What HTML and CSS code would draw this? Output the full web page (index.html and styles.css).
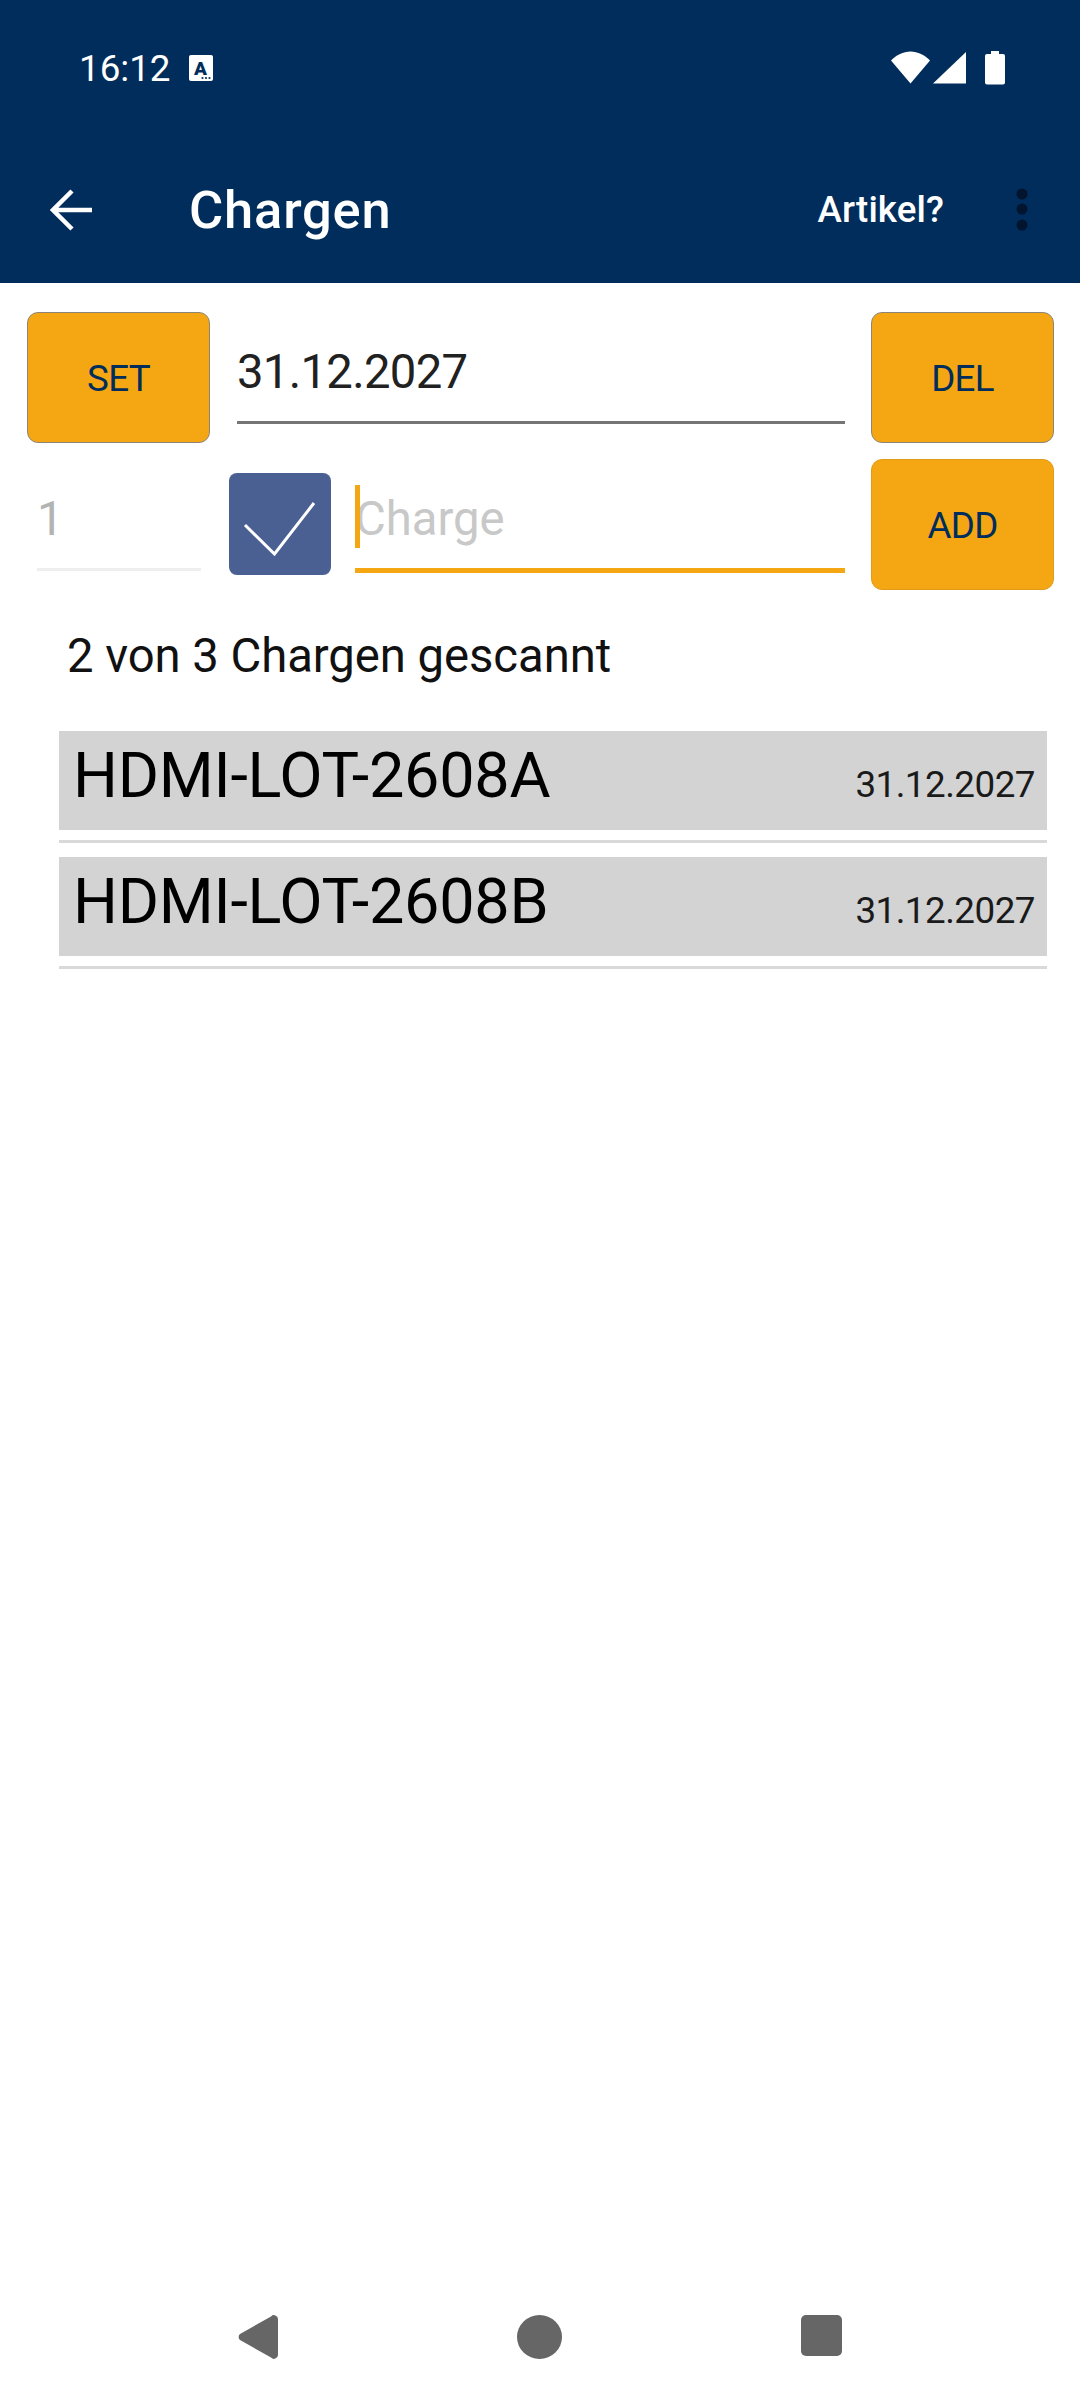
FILE: index.html
```html
<!DOCTYPE html>
<html lang="de">
<head>
  <meta charset="UTF-8" />
  <meta name="viewport" content="width=device-width, initial-scale=1.0"/>
  <title>Chargen</title>
  <link rel="stylesheet" href="styles.css">
</head>
<body>

<div class="screen">
  <header class="app-header">
    <div class="status-bar">
      <span class="clock">16:12</span>
      <svg class="status-a" width="24" height="26" viewBox="0 0 24 26">
        <rect width="24" height="26" rx="2" fill="#fff"/>
        <text x="11.5" y="20" text-anchor="middle" class="status-a-letter">A</text>
        <circle cx="13.5" cy="23" r="1.1" fill="#002d5b"/>
        <circle cx="17" cy="23" r="1.1" fill="#002d5b"/>
        <circle cx="20.5" cy="23" r="1.1" fill="#002d5b"/>
      </svg>
      <svg class="status-icons" width="114" height="34" viewBox="0 0 114 34" fill="#fff">
        <path d="M0 9.5C5.5 4 12 .5 19.500 .5S33.500 4 39 9.500L19.500 32.500Z"/>
        <path d="M75 1V32.500H42Z"/>
        <rect x="100" y="0" width="8" height="5"/>
        <rect x="94" y="3" width="20" height="30.500" rx="2"/>
      </svg>
    </div>
    <div class="toolbar">
      <svg class="back" width="42" height="42" viewBox="0 0 42 42">
        <path d="M42 21H3M22 2 3 21l19 19" fill="none" stroke="#fff" stroke-width="4.500"/>
      </svg>
      <h1 class="title">Chargen</h1>
      <span class="action">Artikel?</span>
      <svg class="more" width="12" height="44" viewBox="0 0 12 44">
        <circle cx="6" cy="6" r="5.500"/>
        <circle cx="6" cy="21" r="5.500"/>
        <circle cx="6" cy="37" r="5.500"/>
      </svg>
    </div>
  </header>

  <main class="content">
    <div class="form-row">
      <button class="btn btn-outline">SET</button>
      <input class="field field-date" value="31.12.2027">
      <button class="btn btn-outline">DEL</button>
    </div>
    <div class="form-row form-row-second">
      <input class="field field-qty" value="1">
      <div class="check">
        <svg width="102" height="102" viewBox="0 0 102 102">
          <path d="M16 52 45.500 81 85 30" fill="none" stroke="#fff" stroke-width="3"/>
        </svg>
      </div>
      <div class="charge-wrap">
        <input class="field field-charge" placeholder="Charge">
        <span class="caret"></span>
      </div>
      <button class="btn">ADD</button>
    </div>

    <p class="scan-count">2 von 3 Chargen gescannt</p>

    <ul class="lots">
      <li class="lot">
        <div class="lot-row">
          <span class="lot-name">HDMI-LOT-2608A</span>
          <span class="lot-date">31.12.2027</span>
        </div>
      </li>
      <li class="lot">
        <div class="lot-row">
          <span class="lot-name">HDMI-LOT-2608B</span>
          <span class="lot-date">31.12.2027</span>
        </div>
      </li>
    </ul>
  </main>

  <nav class="nav-bar">
    <svg width="40" height="44" viewBox="0 0 40 44">
      <path d="M33 1.500a4 4 0 0 1 7 2.500v36a4 4 0 0 1-7 2.500L2 25a4 4 0 0 1 0-6Z" fill="#666"/>
    </svg>
    <svg width="45" height="44" viewBox="0 0 45 44">
      <ellipse cx="22.500" cy="22" rx="22.500" ry="22" fill="#666"/>
    </svg>
    <svg width="41" height="41" viewBox="0 0 41 41">
      <rect width="41" height="41" rx="5" fill="#666"/>
    </svg>
  </nav>
</div>

</body>
</html>
```

FILE: styles.css
```css
* {
  box-sizing: border-box;
}
body {
  margin: 0;
  background: #fff;
  font-family: Roboto, sans-serif;
}
.screen {
  width: 1080px;
  height: 2400px;
  display: flex;
  flex-direction: column;
  overflow: hidden;
}
.app-header {
  background: #002d5b;
  color: #fff;
  height: 283px;
}
.status-bar {
  height: 136px;
  display: flex;
  align-items: center;
  padding: 0 75px 0 79px;
}
.clock {
  font-size: 36.75px;
}
.status-a {
  margin-left: 18px;
}
.status-a-letter {
  font-family: Roboto, sans-serif;
  font-weight: 900;
  font-size: 19px;
  fill: #002d5b;
}
.status-icons {
  margin-left: auto;
}
.toolbar {
  height: 147px;
  display: flex;
  align-items: center;
  padding: 0 52px 0 50px;
}
.title {
  margin: 0 0 0 97px;
  font-size: 52.5px;
  font-weight: 500;
  letter-spacing: 0.8px;
}
.action {
  margin-left: auto;
  font-size: 36.75px;
  font-weight: 500;
  letter-spacing: 0.1px;
}
.more {
  margin-left: 72px;
  fill: #03142e;
}
.content {
  flex: 1;
  padding-top: 29px;
}
.form-row {
  display: flex;
  align-items: flex-start;
  height: 131px;
  padding: 0 26px 0 27px;
}
.form-row-second {
  margin-top: 16px;
  padding-left: 37px;
}
.btn {
  width: 183px;
  height: 131px;
  flex: none;
  padding: 2px 0 0;
  background: #f5a713;
  border: 1.500px solid #e09c18;
  border-radius: 11px;
  color: #002d5b;
  font-family: Roboto, sans-serif;
  font-size: 36.75px;
  letter-spacing: -0.7px;
}
.btn-outline {
  border-color: #8c8577;
}
.field {
  display: block;
  height: 112px;
  padding: 32px 0 21px;
  border: 0;
  border-bottom: 3px solid #757575;
  border-radius: 0;
  background: none;
  color: #212121;
  font-family: Roboto, sans-serif;
  font-size: 47.25px;
  line-height: 56px;
  outline: none;
}
.field-date {
  flex: 1;
  min-width: 0;
  margin: 0 26px 0 27px;
  letter-spacing: -0.7px;
}
.field-qty {
  width: 164px;
  flex: none;
  border-bottom-color: #eee;
  color: #b3b3b3;
}
.check {
  width: 102px;
  height: 102px;
  flex: none;
  margin: 14px 0 0 27.500px;
  background: #4a5f92;
  border-radius: 8px;
}
.check svg {
  display: block;
}
.charge-wrap {
  flex: 1;
  min-width: 0;
  margin: 0 26px 0 24.500px;
  position: relative;
}
.field-charge {
  width: 100%;
  height: 114px;
  border-bottom: 5px solid #f5a713;
}
.field-charge::placeholder {
  color: #c8c8c8;
  opacity: 1;
}
.caret {
  position: absolute;
  left: 0;
  top: 26px;
  width: 4.500px;
  height: 63px;
  background: #f5a713;
}
.scan-count {
  margin: 38px 0 0 67px;
  color: #111;
  font-size: 47.25px;
  line-height: 56px;
  letter-spacing: -0.05px;
}
.lots {
  list-style: none;
  margin: 47px 33px 0 59px;
  padding: 0;
}
.lot {
  height: 126px;
}
.lot-row {
  height: 99px;
  background: #d3d3d3;
  display: flex;
  align-items: flex-start;
  justify-content: space-between;
  padding: 0 12px 0 14px;
}
.lot::after {
  content: "";
  display: block;
  height: 3px;
  margin-top: 10px;
  background: #d9d9d9;
}
.lot-name {
  color: #000;
  font-size: 63px;
  line-height: 74px;
  margin-top: 8px;
  letter-spacing: -0.25px;
}
.lot-date {
  color: #1a1a1a;
  font-size: 36.75px;
  line-height: 44px;
  margin-top: 32px;
  letter-spacing: -0.5px;
}
.nav-bar {
  height: 126px;
  display: flex;
  align-items: flex-start;
  padding: 41px 0 0 238px;
  gap: 239px;
}
```
